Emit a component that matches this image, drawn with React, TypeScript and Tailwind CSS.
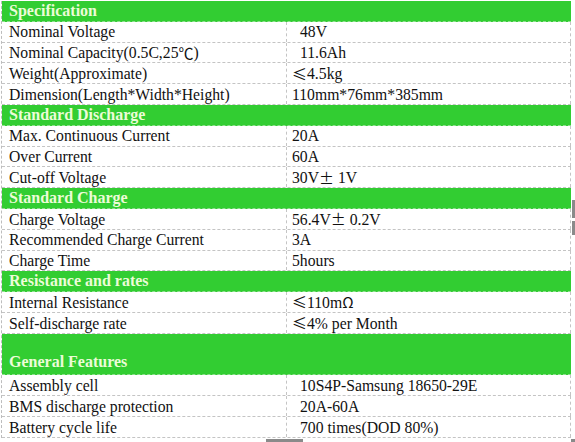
import React from "react";

type Row =
  | { kind: "head"; title: string; tall?: boolean }
  | { kind: "data"; label: React.ReactNode; value: React.ReactNode; indent?: boolean };

const Sym = ({ children }: { children: React.ReactNode }) => (
  <span className="font-['Noto_Sans_CJK_SC',sans-serif] text-[15px]">{children}</span>
);

const rows: Row[] = [
  { kind: "head", title: "Specification" },
  { kind: "data", label: "Nominal Voltage", value: "48V", indent: true },
  {
    kind: "data",
    label: (
      <>
        Nominal Capacity(0.5C,25<Sym>℃</Sym>)
      </>
    ),
    value: "11.6Ah",
    indent: true,
  },
  { kind: "data", label: "Weight(Approximate)", value: <><Sym>≤</Sym>4.5kg</> },
  { kind: "data", label: "Dimension(Length*Width*Height)", value: "110mm*76mm*385mm" },
  { kind: "head", title: "Standard Discharge" },
  { kind: "data", label: "Max. Continuous Current", value: "20A" },
  { kind: "data", label: "Over Current", value: "60A" },
  { kind: "data", label: "Cut-off Voltage", value: <>30V<Sym>±</Sym>&nbsp;1V</> },
  { kind: "head", title: "Standard Charge" },
  { kind: "data", label: "Charge Voltage", value: <>56.4V<Sym>±</Sym>&nbsp;0.2V</> },
  { kind: "data", label: "Recommended Charge Current", value: "3A" },
  { kind: "data", label: "Charge Time", value: "5hours" },
  { kind: "head", title: "Resistance and rates" },
  { kind: "data", label: "Internal Resistance", value: <><Sym>≤</Sym>110m<Sym>Ω</Sym></> },
  { kind: "data", label: "Self-discharge rate", value: <><Sym>≤</Sym>4% per Month</> },
  { kind: "head", title: "General Features", tall: true },
  { kind: "data", label: "Assembly cell", value: "10S4P-Samsung 18650-29E", indent: true },
  { kind: "data", label: "BMS discharge protection", value: "20A-60A", indent: true },
  { kind: "data", label: "Battery cycle life", value: "700 times(DOD 80%)", indent: true },
];

export default function App() {
  return (
    <div className="relative w-[575px] h-[442px] bg-white overflow-hidden font-['Liberation_Serif',serif] text-[15.7px] text-[#111]">
      <div className="pl-[1px] pt-[1px]">
        <div className="w-[570px] border-l border-dashed border-[#bdbdbd] flex flex-col">
          {rows.map((row, i) =>
            row.kind === "head" ? (
              <div
                key={i}
                className={`flex ${
                  row.tall ? "h-[41.6px] items-end" : "h-[20.8px] items-center"
                } bg-[#32cd32] border-b border-dashed border-[#8fe08f] pl-[7px] font-bold text-[16px] text-[#ecfcd8]`}
              >
                {row.title}
              </div>
            ) : (
              <div key={i} className="flex h-[20.8px] border-b border-dashed border-[#c4c4c4]">
                <div className="w-[285px] flex items-center pt-[1px] pl-[7px] border-r border-dashed border-[#c4c4c4] whitespace-nowrap">
                  {row.label}
                </div>
                <div
                  className={`flex-1 flex items-center pt-[1px] border-r border-dashed border-[#c4c4c4] whitespace-nowrap ${
                    row.indent ? "pl-[13px]" : "pl-[5px]"
                  }`}
                >
                  {row.value}
                </div>
              </div>
            )
          )}
        </div>
      </div>
      {/* scrollbar remnants at the window edges */}
      <div className="absolute left-[572px] top-[200px] w-[3px] h-[35px] bg-[#8a8a8a]">
        <div className="mt-[18px] h-[3px] w-[3px] bg-white" />
      </div>
      <div className="absolute left-[266px] top-[439px] w-[37px] h-[3px] bg-[#8a8a8a]" />
      <div className="absolute left-[571px] top-[439px] w-[4px] h-[3px] bg-[#8a8a8a]" />
    </div>
  );
}
